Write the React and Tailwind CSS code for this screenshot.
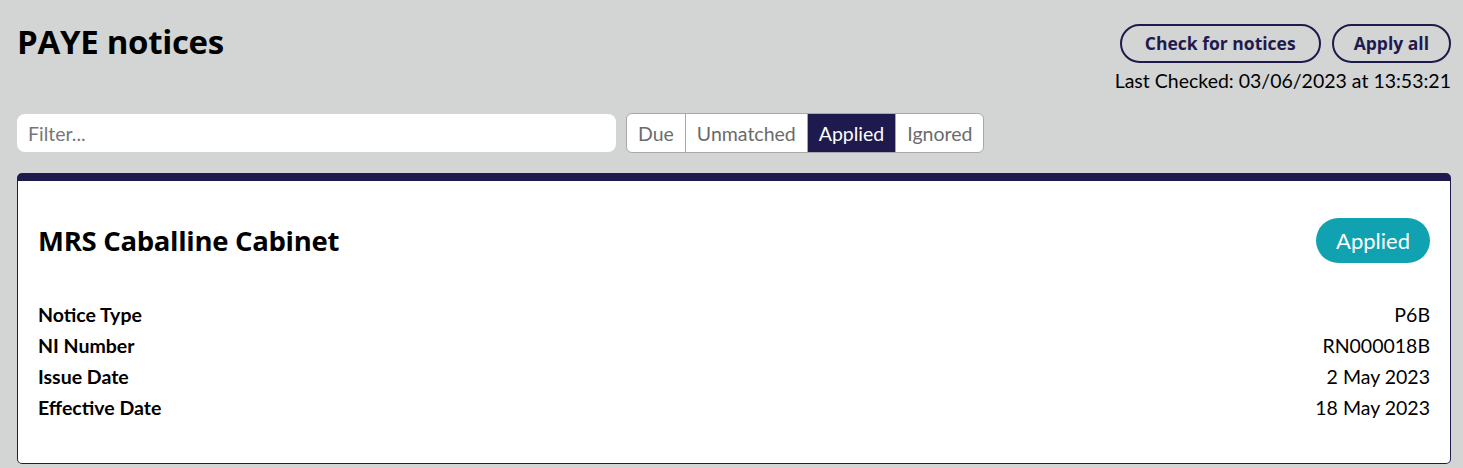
import React, { useState } from "react";

const tabs = ["Due", "Unmatched", "Applied", "Ignored"];

const details = [
  { label: "Notice Type", value: "P6B" },
  { label: "NI Number", value: "RN000018B" },
  { label: "Issue Date", value: "2 May 2023" },
  { label: "Effective Date", value: "18 May 2023" },
];

const App = () => {
  const [activeTab, setActiveTab] = useState("Applied");

  return (
    <div className="min-h-screen bg-[#d3d4d4] pl-[17px] pr-[12px] pt-[24px] font-['Lato',sans-serif] text-[#111]">
      {/* Header */}
      <header className="flex justify-between items-start">
        <h1 className="mt-[-2px] text-[33px] leading-[40px] font-bold tracking-[-0.3px] text-black font-['Open_Sans',sans-serif]">
          PAYE notices
        </h1>
        <div className="flex flex-col items-end">
          <div className="flex gap-[11px]">
            <button className="h-[39px] px-[23px] rounded-full border-2 border-[#1e1a4d] text-[17.5px] font-bold text-[#1e1a4d] font-['Open_Sans',sans-serif]">
              Check for notices
            </button>
            <button className="h-[39px] px-[20px] rounded-full border-2 border-[#1e1a4d] text-[17.5px] font-bold text-[#1e1a4d] font-['Open_Sans',sans-serif]">
              Apply all
            </button>
          </div>
          <p className="mt-[6px] text-[19.5px] leading-[24px] text-black">
            Last Checked: 03/06/2023 at 13:53:21
          </p>
        </div>
      </header>

      {/* Filter row */}
      <div className="mt-[20px] flex items-center gap-[10px]">
        <input
          placeholder="Filter..."
          className="w-[599px] h-[38px] rounded-[8px] bg-white px-[11px] text-[19.5px] placeholder:text-[#777] outline-none"
        />
        <div className="flex h-[40px] rounded-[6px] border border-[#a8a8a8] bg-white overflow-hidden">
          {tabs.map((tab, i) => (
            <button
              key={tab}
              onClick={() => setActiveTab(tab)}
              className={`px-[11px] pt-[2px] text-[19.5px] ${
                i > 0 ? "border-l border-[#a8a8a8]" : ""
              } ${
                activeTab === tab
                  ? "bg-[#1e1a4d] text-white"
                  : "text-[#6b6b6b]"
              }`}
            >
              {tab}
            </button>
          ))}
        </div>
      </div>

      {/* Notice card */}
      <div className="mt-[20px] rounded-[5px] border border-[#1e1a4d] border-t-[8px] bg-white px-[20px] pt-[37px] pb-[40px]">
        <div className="flex justify-between items-center">
          <h2 className="text-[27.5px] font-bold text-black font-['Open_Sans',sans-serif] tracking-[-0.3px]">
            MRS Caballine Cabinet
          </h2>
          <span className="h-[45px] px-[20px] flex items-center rounded-full bg-[#10a2b1] text-white text-[22px]">
            Applied
          </span>
        </div>
        <div className="mt-[36px]">
          {details.map((d) => (
            <div key={d.label} className="flex justify-between h-[31px] items-center text-[19.5px]">
              <span className="font-bold text-black">{d.label}</span>
              <span className="text-black">{d.value}</span>
            </div>
          ))}
        </div>
      </div>
    </div>
  );
};

export default App;
